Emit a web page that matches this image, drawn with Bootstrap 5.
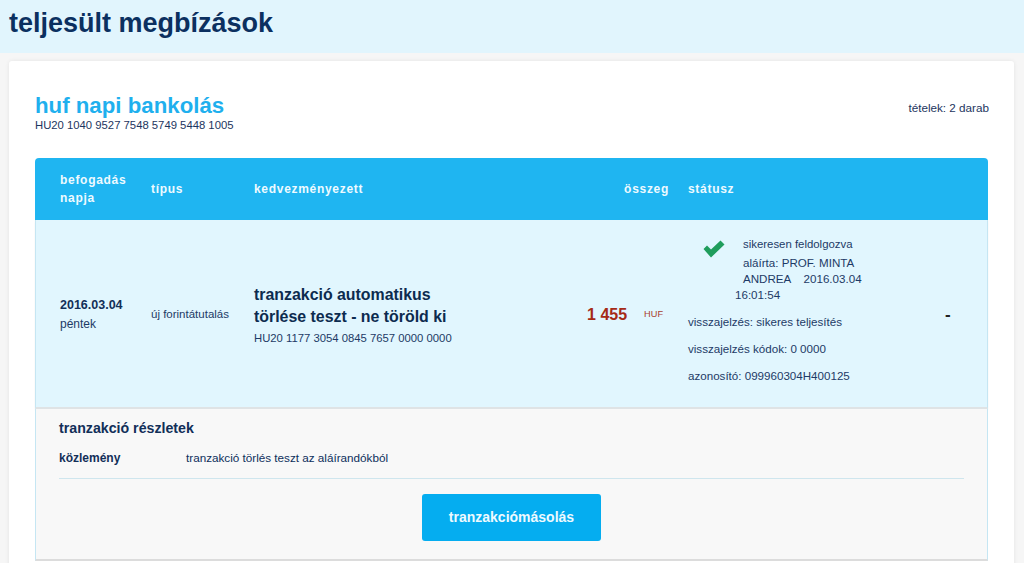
<!DOCTYPE html>
<html lang="hu">
<head>
<meta charset="utf-8">
<title>teljesült megbízások</title>
<link rel="stylesheet" href="https://cdn.jsdelivr.net/npm/bootstrap@5.3.0/dist/css/bootstrap.min.css">
<style>
html,body{height:563px;overflow:hidden}
body{background:#f6f6f6;font-family:"Liberation Sans",Arial,sans-serif;color:#0d2f5c;font-size:12px}
.page-head{height:53px;background:#e1f5fd;padding:6px 9px 0}
.page-head h1{font-size:27px;line-height:34px;font-weight:700;margin:0;color:#0b3060}
.sheet{background:#fff;margin:8px 10px 0 9px;padding:31px 26px 0;border-radius:3px;box-shadow:0 0 4px rgba(0,0,0,.08);height:600px}
.acct-title{font-size:22.25px;line-height:28px;font-weight:700;color:#1fb0ee;margin:0}
.acct-iban{font-size:11.3px;line-height:14px;margin:-2px 0 0;color:#1d3560}
.acct-count{font-size:11.7px;line-height:14px;margin-top:9px;margin-right:-1px;color:#1d3560}
.tbl{margin-top:26px}
.tbl-head{height:62px;background:#1fb5f1;border-radius:4px 4px 0 0;color:#eefaff;font-weight:700;font-size:12px;line-height:18px;letter-spacing:.7px}
.c-date{width:116px;padding-left:25px;flex:none}
.c-type{width:103px;flex:none}
.c-name{width:245px;flex:none}
.c-sum{width:170px;flex:none}
.c-stat{width:260px;flex:none;padding-left:19px}
.tbl-row{height:189px;padding-top:2px;background:#e1f6fe;border-left:1px solid #c5e6f3;border-right:1px solid #c5e6f3;border-bottom:2px solid #dfe3e5;box-shadow:0 1px 2px rgba(0,0,0,.05);color:#1d3a66}
.tbl-row .c-date{width:115px;padding-left:24px}
.tbl-row .c-sum{width:171px}
.t-date{font-weight:700;font-size:12.5px;line-height:19px;color:#122f58}
.t-day{line-height:19px}
.t-type{font-size:11.5px}
.t-name{font-size:15.9px;line-height:22.5px;font-weight:700;color:#0c2b4f}
.t-iban{font-size:11.3px;line-height:16px;margin-top:1px}
.c-sum.amount{color:#a52a16;font-weight:700;font-size:16px}
.t-cur{font-size:9.2px;font-weight:400;margin-left:17px;margin-right:7px;color:#a8402f}
.c-stat.cellcol{width:257px;padding:14px 0 0 18px;align-self:flex-start}
.stat-top{height:67px;position:relative;font-size:11.4px;line-height:16px;padding-left:55px}
.stat-mark{position:absolute;left:15px;top:4px;width:22px;height:18px}
.stat-signed{margin-top:3px;width:130px;font-size:11.6px}
.stat-time{margin-left:-8px}
.stat-line{font-size:11.6px;line-height:16px;margin-top:11px}
.stat-dash{flex:1;font-size:17px;font-weight:700;color:#222;padding-left:18px}
.detail{height:152px;background:#f8f8f8;border-left:1px solid #c5e6f3;border-right:1px solid #c5e6f3;border-bottom:2px solid #dcdcdc;padding:10px 23px 0 23px}
.detail h3{font-size:14.2px;line-height:18px;font-weight:700;margin:0;color:#122f58}
.d-row{margin-top:13px;padding-bottom:12px;border-bottom:1px solid #cfe6ee;font-size:11.7px;line-height:16px}
.d-label{width:127px;font-weight:700;font-size:12px;color:#122f58}
.copy-btn{width:179px;height:47px;margin-top:15px;background:#05adf0;border:none;border-radius:3px;color:#eefaff;font-weight:700;font-size:14px;padding:0}
.copy-btn:hover{background:#05adf0;color:#eefaff}
</style>
</head>
<body>
<header class="page-head"><h1>teljesült megbízások</h1></header>
<main class="sheet">
  <div class="d-flex justify-content-between align-items-start">
    <div>
      <h2 class="acct-title">huf napi bankolás</h2>
      <p class="acct-iban">HU20 1040 9527 7548 5749 5448 1005</p>
    </div>
    <div class="acct-count">tételek: 2 darab</div>
  </div>
  <section class="tbl">
    <div class="tbl-head d-flex align-items-center">
      <div class="c-date">befogadás<br>napja</div>
      <div class="c-type">típus</div>
      <div class="c-name">kedvezményezett</div>
      <div class="c-sum text-end">összeg</div>
      <div class="c-stat">státusz</div>
    </div>
    <div class="tbl-row d-flex align-items-center">
      <div class="c-date"><div class="t-date">2016.03.04</div><div class="t-day">péntek</div></div>
      <div class="c-type t-type">új forintátutalás</div>
      <div class="c-name">
        <div class="t-name">tranzakció automatikus<br>törlése teszt - ne töröld ki</div>
        <div class="t-iban">HU20 1177 3054 0845 7657 0000 0000</div>
      </div>
      <div class="c-sum amount text-end d-flex align-items-center justify-content-end"><span>1 455</span><span class="t-cur">HUF</span></div>
      <div class="c-stat cellcol">
        <div class="stat-top">
          <svg class="stat-mark" viewBox="0 0 22 18" aria-hidden="true"><path d="M.5 9 4 5.5 8 9.5 17.5.5 21.5 4.5 8 17.5Z" fill="#1f9d5c"/></svg>
          <div>sikeresen feldolgozva</div>
          <div class="stat-signed">aláírta: PROF. MINTA ANDREA &nbsp;&nbsp; 2016.03.04<br><span class="stat-time">16:01:54</span></div>
        </div>
        <div class="stat-line">visszajelzés: sikeres teljesítés</div>
        <div class="stat-line">visszajelzés kódok: 0 0000</div>
        <div class="stat-line">azonosító: 099960304H400125</div>
      </div>
      <div class="stat-dash">-</div>
    </div>
    <div class="detail">
      <h3>tranzakció részletek</h3>
      <div class="d-row d-flex"><div class="d-label">közlemény</div><div>tranzakció törlés teszt az aláírandókból</div></div>
      <div class="text-center"><button type="button" class="btn copy-btn">tranzakciómásolás</button></div>
    </div>
  </section>
</main>
<script src="https://cdn.jsdelivr.net/npm/bootstrap@5.3.0/dist/js/bootstrap.bundle.min.js"></script>
</body>
</html>
